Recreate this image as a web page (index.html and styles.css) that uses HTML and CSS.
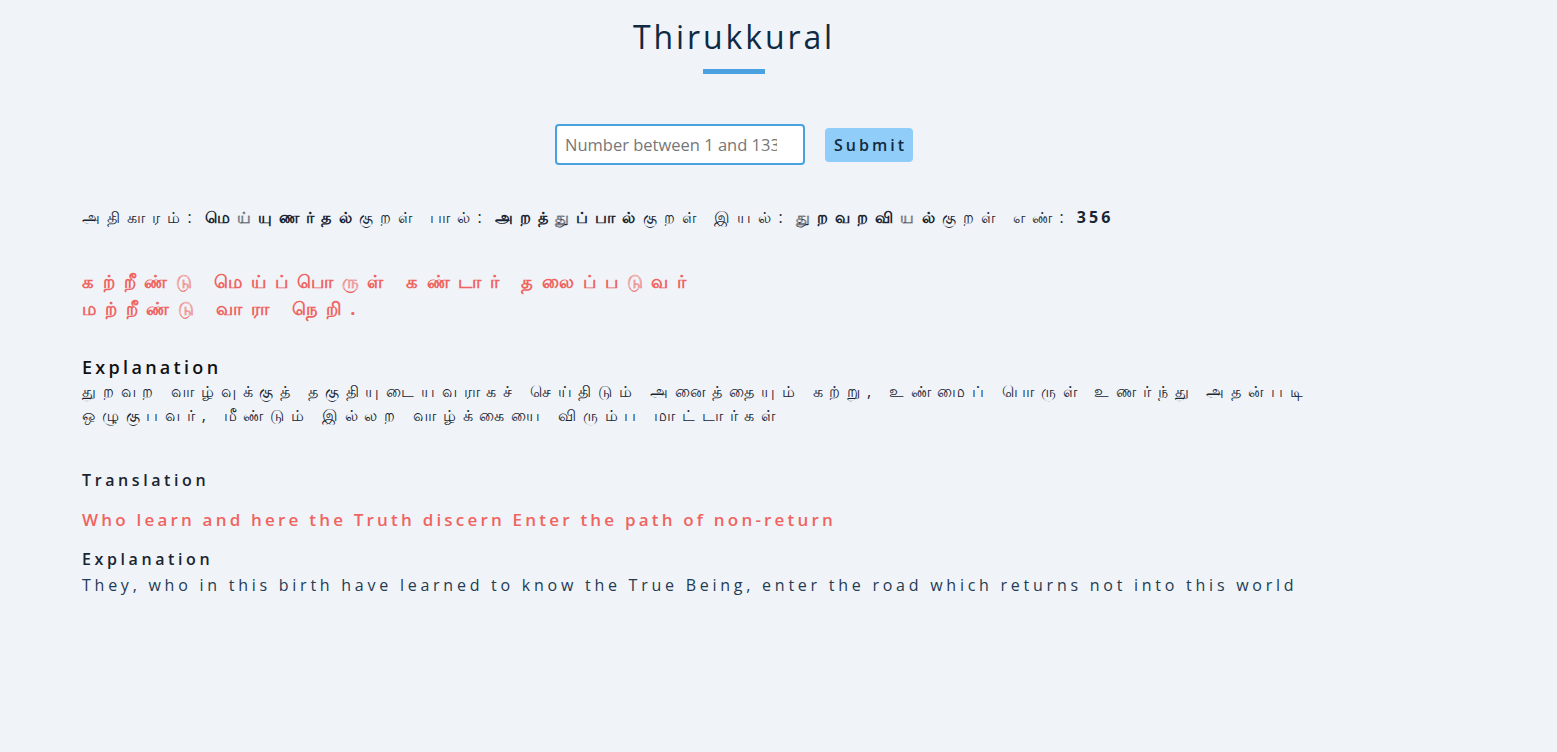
FILE: index.html
```html
<!DOCTYPE html>
<html lang="ta">
<head>
<meta charset="utf-8">
<title>Thirukkural</title>
<link rel="stylesheet" href="styles.css">
</head>
<body>
<div class="page">
<header class="header">
  <h1 class="title">Thirukkural</h1>
  <div class="underline"></div>
</header>
<form class="search">
  <input class="search-input" type="text" placeholder="Number between 1 and 1330">
  <button class="search-btn" type="button">Submit</button>
</form>
<main class="content">
  <p class="meta"><span class="ta">அதிகாரம்:</span> <b class="ta">மெய்யுணர்தல்</b><span class="ta">குறள் பால்:</span> <b class="ta">அறத்துப்பால்</b><span class="ta">குறள் இயல்:</span> <b class="ta">துறவறவியல்</b><span class="ta">குறள் எண்:</span> <b class="num">356</b></p>
  <p class="kural">கற்றீண்டு மெய்ப்பொருள் கண்டார் தலைப்படுவர்<br>மற்றீண்டு வாரா நெறி.</p>
  <h3 class="heading">Explanation</h3>
  <p class="tamil-text">துறவற வாழ்வுக்குத் தகுதியுடையவராகச் செய்திடும் அனைத்தையும் கற்று, உண்மைப் பொருள் உணர்ந்து அதன்படி<br>ஒழுகுபவர், மீண்டும் இல்லற வாழ்க்கையை விரும்ப மாட்டார்கள்</p>
  <h4 class="heading small tr-heading">Translation</h4>
  <p class="translation">Who learn and here the Truth discern Enter the path of non-return</p>
  <h4 class="heading small">Explanation</h4>
  <p class="eng-text">They, who in this birth have learned to know the True Being, enter the road which returns not into this world</p>
</main>
</div>
</body>
</html>
```
FILE: styles.css
```css
* { box-sizing: border-box; }
html, body { margin: 0; padding: 0; }
body {
  background: #f0f4f8;
  font-family: "Open Sans", "Noto Sans", sans-serif;
  color: #1a2533;
  min-height: 752px;
}
.page {
  width: 1468px;
}
.header {
  display: flex;
  flex-direction: column;
  align-items: center;
  padding-top: 15px;
}
.title {
  margin: 0;
  font-size: 32px;
  font-weight: 400;
  letter-spacing: 2.9px;
  color: #102a43;
  line-height: 44px;
}
.underline {
  width: 62px;
  height: 5px;
  background: #4aa1e0;
  margin-top: 10px;
}
.search {
  display: flex;
  justify-content: center;
  align-items: center;
  gap: 20px;
  margin-top: 50px;
}
.search-input {
  width: 250px;
  height: 41px;
  border: 2px solid #4aa1e0;
  border-radius: 4px;
  padding: 0 26px 0 8px;
  font-family: "Open Sans", sans-serif;
  font-size: 16.5px;
  color: #333;
  background: #fff;
  outline: none;
}
.search-input::placeholder { color: #777; }
.search-btn {
  height: 34px;
  width: 88px;
  border: none;
  border-radius: 4px;
  background: #90cdf8;
  font-family: "Open Sans", sans-serif;
  font-size: 16px;
  font-weight: 600;
  letter-spacing: 3px;
  color: #102a43;
  padding: 0 0 0 3px;
}
.content {
  padding: 0 0 0 82px;
}
.meta {
  margin: 40px 0 0;
  font-size: 16px;
  letter-spacing: 2px;
  line-height: 24px;
  color: #1a2533;
}
.meta .ta { letter-spacing: 7.1px; }
.meta b { font-weight: 700; }
.meta .num { letter-spacing: 3px; }
.kural {
  margin: 39px 0 0;
  color: #ef6461;
  font-weight: 700;
  font-size: 18px;
  letter-spacing: 8.8px;
  line-height: 27px;
}
.heading {
  margin: 33px 0 0;
  font-size: 18px;
  font-weight: 600;
  letter-spacing: 3.3px;
  line-height: 24px;
  color: #111;
}
.heading.small {
  font-size: 16px;
  letter-spacing: 3.6px;
  color: #1a2533;
}
.tamil-text {
  margin: 0;
  font-size: 16px;
  letter-spacing: 6.8px;
  line-height: 24px;
}
.tr-heading { margin-top: 41px; }
.translation {
  margin: 16px 0 0;
  color: #ef6461;
  font-size: 17px;
  font-weight: 600;
  letter-spacing: 3.2px;
  line-height: 24px;
}
.translation + .heading { margin-top: 15px; }
.eng-text {
  margin: 2px 0 0;
  font-size: 16px;
  letter-spacing: 3.75px;
  line-height: 24px;
  color: #243b53;
}
```
